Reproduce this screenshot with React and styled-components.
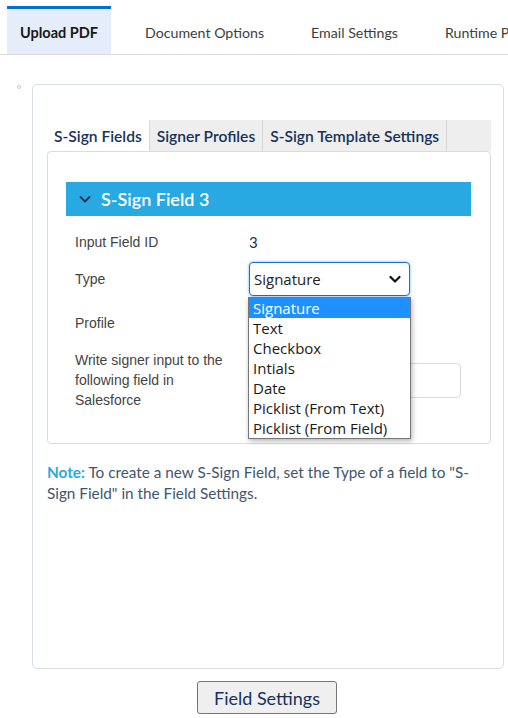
import React from "react";
import styled, { createGlobalStyle } from "styled-components";

const GlobalStyle = createGlobalStyle`
  body {
    margin: 0;
    background: #fff;
    font-family: "Lato", "Liberation Sans", sans-serif;
    overflow: hidden;
  }
`;

const Page = styled.div`
  width: 508px;
  height: 718px;
  overflow: hidden;
`;

const TopTabs = styled.div`
  display: flex;
  gap: 21px;
  padding: 6px 0 0 7px;
  border-bottom: 1px solid #dddbda;
  white-space: nowrap;
`;

const TopTab = styled.div`
  display: flex;
  align-items: center;
  height: 44px;
  padding: 1px 13px 0;
  font-size: ${(p) => (p.$active ? "14.5px" : "14.2px")};
  color: ${(p) => (p.$active ? "#181818" : "#3e3e3c")};
  font-weight: ${(p) => (p.$active ? 700 : 400)};
  background: ${(p) => (p.$active ? "#e4edf9" : "transparent")};
  border-top: 3px solid ${(p) => (p.$active ? "#0070d2" : "transparent")};
`;

const Body = styled.div`
  display: flex;
  align-items: flex-start;
  padding: 29px 0 0 17px;
`;

const Dot = styled.span`
  width: 2px;
  height: 2px;
  margin-top: 1px;
  border: 1px solid #c9c9c9;
  border-radius: 50%;
`;

const Card = styled.div`
  box-sizing: border-box;
  width: 472px;
  height: 585px;
  margin-left: 11px;
  padding: 35px 12px 0 14px;
  border: 1px solid #d8dde6;
  border-radius: 5px;
`;

const SubTabs = styled.div`
  display: flex;
  height: 31px;
  background: #eeeeee;
`;

const SubTab = styled.div`
  display: flex;
  align-items: center;
  padding: 0 7px;
  font-size: 15.6px;
  font-weight: 600;
  color: #16325c;
  background: ${(p) => (p.$active ? "#fff" : "transparent")};
  border-right: 1px solid #d8d8d8;
`;

const Panel = styled.div`
  box-sizing: border-box;
  height: 293px;
  padding: 30px 19px 0 18px;
  border: 1px solid #dddbda;
  border-radius: 4px;
`;

const SectionHeader = styled.div`
  display: flex;
  align-items: center;
  gap: 10px;
  height: 34px;
  padding-left: 13px;
  background: #29a9e1;
  color: #fff;
  font-size: 18px;
  font-weight: 600;
`;

const Rows = styled.div`
  display: flex;
  flex-direction: column;
  gap: 10px;
  padding: 16px 0 0 9px;
`;

const Row = styled.div`
  display: grid;
  grid-template-columns: 174px 1fr;
  align-items: center;
  min-height: ${(p) => p.$h || 34}px;
`;

const Label = styled.div`
  font-family: "Liberation Sans", Arial, sans-serif;
  font-size: 14px;
  line-height: 20px;
  color: #444;
  width: 150px;
`;

const Value = styled.div`
  font-family: "Lato", sans-serif;
  font-size: 15px;
  color: #16325c;
  line-height: 20px;
`;

const SelectWrap = styled.div`
  position: relative;
  width: 161px;
`;

const SelectBox = styled.div`
  box-sizing: border-box;
  display: flex;
  align-items: center;
  justify-content: space-between;
  height: 34px;
  padding: 0 8px 0 4px;
  border: 1px solid #1b6fc9;
  border-radius: 4px;
  box-shadow: 0 0 2px 1px rgba(27, 150, 255, 0.35);
  font-family: "Open Sans", sans-serif;
  font-size: 15px;
  color: #222;
`;

const Dropdown = styled.ul`
  position: absolute;
  top: 35px;
  left: -1px;
  width: 161px;
  margin: 0;
  padding: 0;
  list-style: none;
  background: #fff;
  border: 1px solid #767676;
  box-shadow: 1px 2px 5px rgba(0, 0, 0, 0.3);
  z-index: 2;
`;

const Option = styled.li`
  height: 20px;
  padding-left: 4px;
  font-family: "Open Sans", sans-serif;
  font-size: 15px;
  line-height: 20px;
  color: ${(p) => (p.$selected ? "#fff" : "#1a1a1a")};
  background: ${(p) => (p.$selected ? "#1e90ff" : "transparent")};
`;

const TextInput = styled.div`
  box-sizing: border-box;
  width: 212px;
  height: 35px;
  border: 1px solid #dddbda;
  border-radius: 4px;
`;

const Note = styled.p`
  margin: 18px 0 0;
  font-size: 15.3px;
  line-height: 21px;
  color: #3e5670;

  strong {
    color: #29a9e1;
    font-weight: 700;
  }
`;

const Footer = styled.div`
  display: flex;
  justify-content: center;
  padding: 12px 0 0 26px;
`;

const Button = styled.button`
  width: 140px;
  height: 33px;
  background: #efefef;
  border: 1px solid #767676;
  border-radius: 3px;
  font-family: "Lato", sans-serif;
  font-size: 18px;
  color: #16325c;
`;

const Chevron = ({ color, size = 12, width = 2 }) => (
  <svg width={size} height={size} viewBox="0 0 12 12">
    <path d="M1.5 4l4.5 4.5 4.5-4.5" fill="none" stroke={color} strokeWidth={width} strokeLinecap="round" strokeLinejoin="round" />
  </svg>
);

const options = ["Signature", "Text", "Checkbox", "Intials", "Date", "Picklist (From Text)", "Picklist (From Field)"];

export default function App() {
  return (
    <Page>
      <GlobalStyle />
      <TopTabs>
        <TopTab $active>Upload PDF</TopTab>
        <TopTab>Document Options</TopTab>
        <TopTab>Email Settings</TopTab>
        <TopTab>Runtime Properties</TopTab>
      </TopTabs>
      <Body>
        <Dot />
        <Card>
          <SubTabs>
            <SubTab $active>S-Sign Fields</SubTab>
            <SubTab>Signer Profiles</SubTab>
            <SubTab>S-Sign Template Settings</SubTab>
          </SubTabs>
          <Panel>
            <SectionHeader>
              <Chevron color="#16325c" size={12} width={1.8} />
              S-Sign Field 3
            </SectionHeader>
            <Rows>
              <Row $h={20}>
                <Label>Input Field ID</Label>
                <Value>3</Value>
              </Row>
              <Row>
                <Label>Type</Label>
                <SelectWrap>
                  <SelectBox>
                    Signature
                    <Chevron color="#111" size={12} width={2.2} />
                  </SelectBox>
                  <Dropdown>
                    {options.map((o, i) => (
                      <Option key={o} $selected={i === 0}>{o}</Option>
                    ))}
                  </Dropdown>
                </SelectWrap>
              </Row>
              <Row>
                <Label>Profile</Label>
                <div />
              </Row>
              <Row $h={60}>
                <Label>Write signer input to the following field in Salesforce</Label>
                <TextInput />
              </Row>
            </Rows>
          </Panel>
          <Note>
            <strong>Note:</strong> To create a new S-Sign Field, set the Type of a field to "S-Sign Field" in the Field Settings.
          </Note>
        </Card>
      </Body>
      <Footer>
        <Button>Field Settings</Button>
      </Footer>
    </Page>
  );
}
